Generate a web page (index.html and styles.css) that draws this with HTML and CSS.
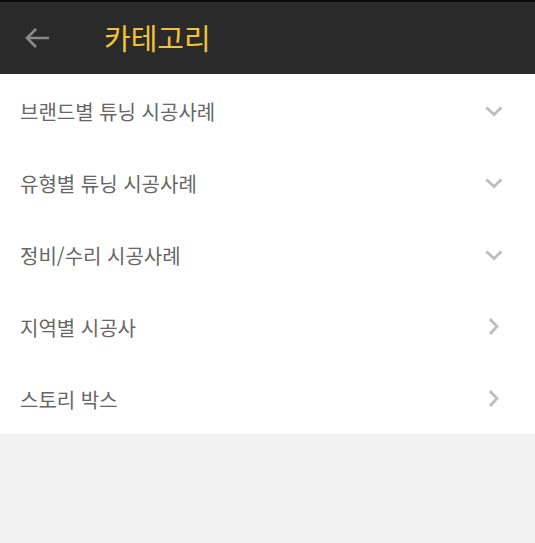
FILE: index.html
```html
<!DOCTYPE html>
<html lang="ko">
<head>
<meta charset="utf-8">
<link rel="stylesheet" href="styles.css">
</head>
<body>
<div class="app">
  <header class="topbar">
    <button class="back" aria-label="back">
      <svg width="26" height="22" viewBox="0 0 26 22"><path d="M25 11H3M12 2L3 11l9 9" fill="none" stroke="#8a8a8a" stroke-width="2.6"/></svg>
    </button>
    <h1 class="title">카테고리</h1>
  </header>
  <ul class="menu">
    <li class="item"><span>브랜드별 튜닝 시공사례</span><svg class="chev" width="18" height="11" viewBox="0 0 18 11"><path d="M1.5 1.5l7.5 7 7.5-7" fill="none" stroke="#bdbdbd" stroke-width="2.8"/></svg></li>
    <li class="item"><span>유형별 튜닝 시공사례</span><svg class="chev" width="18" height="11" viewBox="0 0 18 11"><path d="M1.5 1.5l7.5 7 7.5-7" fill="none" stroke="#bdbdbd" stroke-width="2.8"/></svg></li>
    <li class="item"><span>정비/수리 시공사례</span><svg class="chev" width="18" height="11" viewBox="0 0 18 11"><path d="M1.5 1.5l7.5 7 7.5-7" fill="none" stroke="#bdbdbd" stroke-width="2.8"/></svg></li>
    <li class="item"><span>지역별 시공사</span><svg class="chev right" width="18" height="17" viewBox="0 0 18 17"><path d="M5 1l7 7.5-7 7.5" fill="none" stroke="#bdbdbd" stroke-width="2.8"/></svg></li>
    <li class="item"><span>스토리 박스</span><svg class="chev right" width="18" height="17" viewBox="0 0 18 17"><path d="M5 1l7 7.5-7 7.5" fill="none" stroke="#bdbdbd" stroke-width="2.8"/></svg></li>
  </ul>
</div>
</body>
</html>
```

FILE: styles.css
```css
html, body {
  margin: 0;
  padding: 0;
  background: #f2f2f2;
  font-family: "Noto Sans CJK KR", "Noto Sans", sans-serif;
}
.app {
  width: 535px;
}
.topbar {
  height: 72px;
  background: #2a2a2a;
  border-top: 2px solid #0a0a0a;
  display: flex;
  align-items: center;
}
.back {
  background: none;
  border: 0;
  padding: 0;
  margin-left: 24px;
  width: 26px;
  height: 22px;
  display: flex;
}
.title {
  margin: 0 0 0 54px;
  color: #f2c13c;
  font-size: 29px;
  font-weight: 400;
  line-height: 1;
  padding-bottom: 2px;
}
.menu {
  list-style: none;
  margin: 0;
  padding: 0;
  background: #ffffff;
}
.item {
  height: 72px;
  display: flex;
  align-items: center;
  justify-content: space-between;
  padding: 0 32px 0 20px;
  color: #666666;
  font-size: 20px;
  font-weight: 400;
}
.item span {
  padding-top: 2px;
}
.chev {
  margin-top: 3px;
}
.chev.right {
  margin-top: 1px;
}
```
